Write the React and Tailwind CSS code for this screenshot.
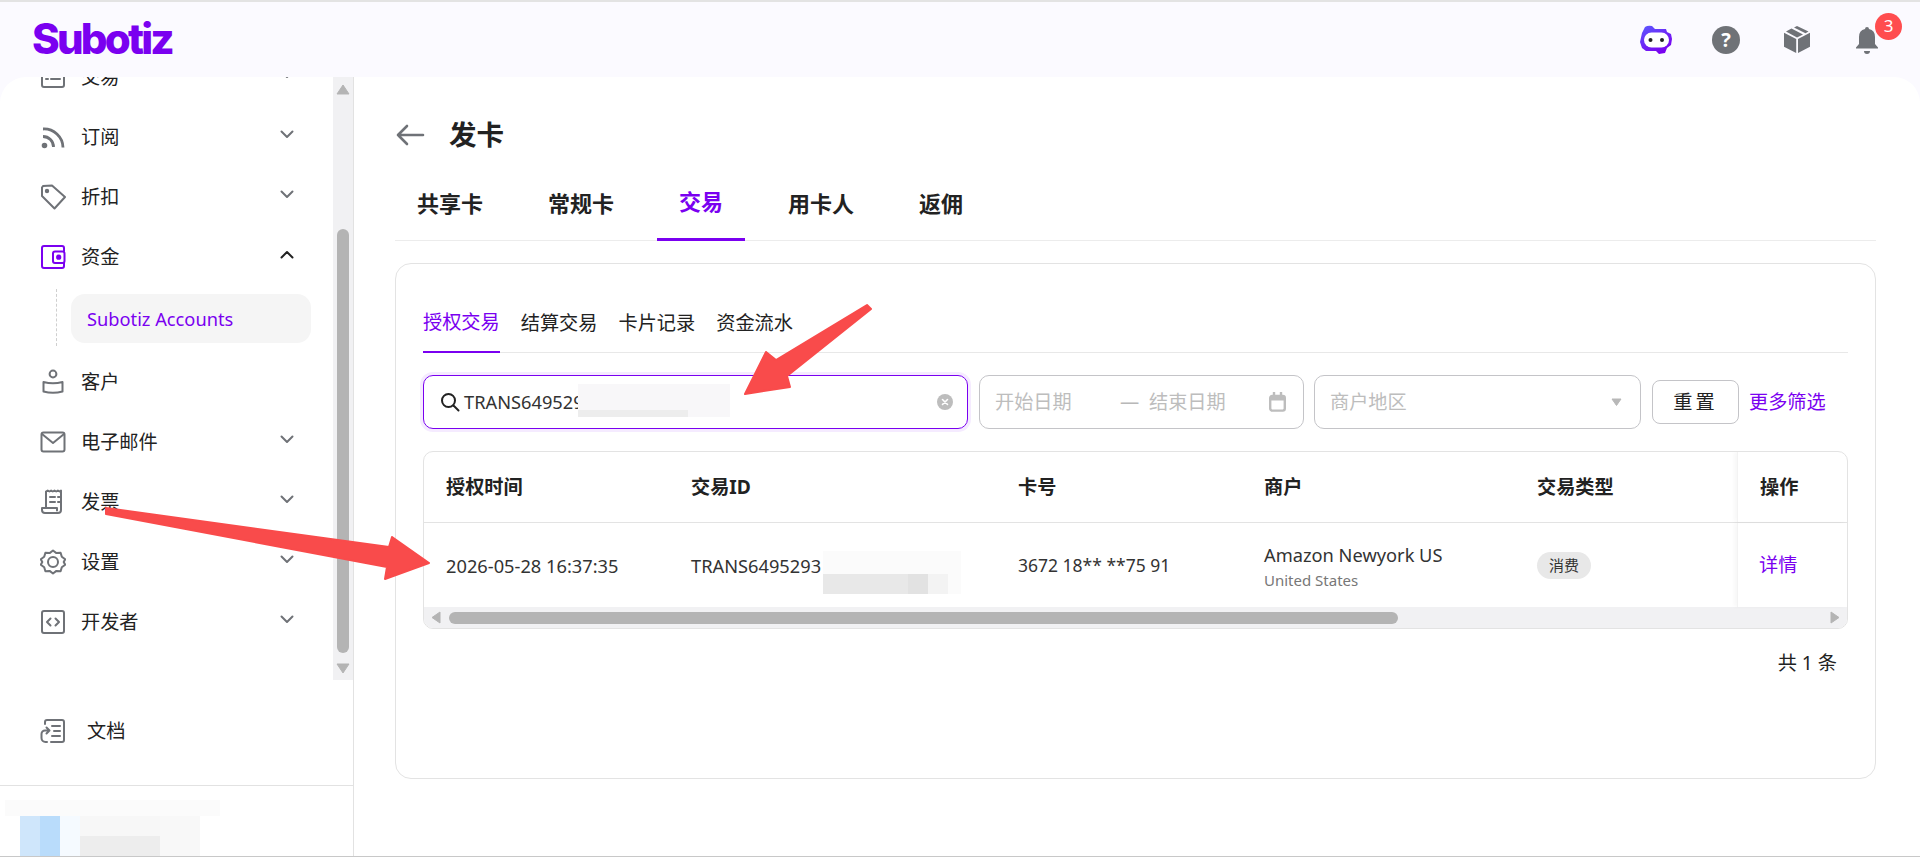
import React from 'react'

const PURPLE = '#7a00f0'

function Icon({ children, color = '#6f7277', size = 26, width = 2 }) {
  return (
    <svg width={size} height={size} viewBox="0 0 26 26" fill="none" stroke={color} strokeWidth={width} strokeLinecap="round" strokeLinejoin="round" className="shrink-0">
      {children}
    </svg>
  )
}

const icons = {
  trade: (
    <>
      <rect x="2" y="3" width="22" height="20" rx="2" />
      <path d="M6 9h2M11 9h9M6 15h2M11 15h9" />
    </>
  ),
  rss: (
    <>
      <circle cx="4.5" cy="21.5" r="1.8" fill="#6f7277" />
      <path d="M3 12.5a10.5 10.5 0 0 1 10.5 10.5M3 5a19 19 0 0 1 20 18.5" strokeWidth="2.8" strokeLinecap="butt" />
    </>
  ),
  tag: (
    <>
      <path d="M2 3.5 3 2l9-.5L25 13 14.5 24.5 2 12z" />
      <circle cx="7" cy="7" r="1.2" fill="#6f7277" />
    </>
  ),
  wallet: (
    <>
      <path d="M24 7V4a2 2 0 0 0-2-2H4a2 2 0 0 0-2 2v18a2 2 0 0 0 2 2h18a2 2 0 0 0 2-2v-3" />
      <rect x="13" y="7.5" width="11.5" height="11.5" rx="2" />
      <circle cx="18.7" cy="13.2" r="1.6" fill={PURPLE} />
    </>
  ),
  user: (
    <>
      <circle cx="13" cy="5" r="3.4" />
      <path d="M3.5 13q9.5 2.5 19 0v9.5q-9.5 2.5-19 0z" />
    </>
  ),
  mail: (
    <>
      <rect x="1.5" y="3.5" width="23" height="19" rx="2" />
      <path d="m2 5 11 9 11-9" />
    </>
  ),
  receipt: (
    <>
      <path d="M6 19V2.5l1.7-1 1.7 1 1.7-1 1.7 1 1.7-1 1.7 1 1.7-1 1.7 1 1.4-1V21a3 3 0 0 1-3 3H5a3 3 0 0 1-3-3v-2h15v2.5" />
      <path d="M10 8h5M18 8h1.5M10 13h5M18 13h1.5" />
    </>
  ),
  gear: (
    <>
      <path d="M13 1.5l3.4 2.6 4.2-.4 1.2 4 3.4 2.6-1.5 2.7 1.5 2.7-3.4 2.6-1.2 4-4.2-.4L13 24.5l-3.4-2.6-4.2.4-1.2-4L.8 15.7l1.5-2.7-1.5-2.7 3.4-2.6 1.2-4 4.2.4z" />
      <circle cx="13" cy="13" r="5" />
    </>
  ),
  code: (
    <>
      <rect x="2" y="2" width="22" height="22" rx="2" />
      <path d="M10.5 9.5 7 13l3.5 3.5M15.5 9.5 19 13l-3.5 3.5" />
    </>
  ),
  doc: (
    <>
      <path d="M5 6V4a2 2 0 0 1 2-2h15a2 2 0 0 1 2 2v18a2 2 0 0 1-2 2H11" />
      <path d="M12 8h8M14 13h6M12 18h8" />
      <path d="M9.5 12.5H5a3.5 3.5 0 0 0-3.5 3.5v4A4 4 0 0 0 5.5 24H7M6.5 9.5l3 3-3 3" />
    </>
  ),
}

function Chevron({ up = false, color = '#6f7277' }) {
  return (
    <svg width="14" height="9" viewBox="0 0 14 9" fill="none" stroke={color} strokeWidth="2" strokeLinecap="round" strokeLinejoin="round">
      <path d={up ? 'M1.5 7.5 7 2l5.5 5.5' : 'M1.5 1.5 7 7l5.5-5.5'} />
    </svg>
  )
}

function NavItem({ icon, label, chevron = true, open = false }) {
  return (
    <div className="flex h-[60px] items-center pl-[40px] pr-[39px]">
      <Icon color={open ? PURPLE : '#6f7277'}>{icons[icon]}</Icon>
      <span className="ml-[15px] flex-1 text-[19.2px] text-[#222]">{label}</span>
      {chevron && (
        <span className="mb-[6px] flex">
          <Chevron up={open} color={open ? '#222' : '#6f7277'} />
        </span>
      )}
    </div>
  )
}

function Sidebar() {
  return (
    <aside className="flex w-[354px] shrink-0 flex-col border-r border-[#e2e2e2]">
      <div className="flex h-[603px] overflow-hidden">
        <div className="min-w-0 flex-1 -mt-[30px]">
          <NavItem icon="trade" label="交易" />
          <NavItem icon="rss" label="订阅" />
          <NavItem icon="tag" label="折扣" />
          <NavItem icon="wallet" label="资金" open />
          <div className="flex h-[65px] pl-[56px] pt-[2px]">
            <div className="h-[57px] border-l border-dashed border-[#cfcfcf]" />
            <div className="ml-[14px] mt-[5px] flex h-[49px] w-[240px] items-center rounded-[14px] bg-[#f5f5f5] pl-[16px] pt-[1px] text-[18.25px] text-[#7a00f0]">
              Subotiz Accounts
            </div>
          </div>
          <NavItem icon="user" label="客户" chevron={false} />
          <NavItem icon="mail" label="电子邮件" />
          <NavItem icon="receipt" label="发票" />
          <NavItem icon="gear" label="设置" />
          <NavItem icon="code" label="开发者" />
        </div>
        <div className="flex h-full w-[20px] shrink-0 flex-col items-center bg-[#f1f1f3] pt-[7px] pb-[6px]">
          <svg width="14" height="11" viewBox="0 0 14 11"><path d="M7 1 13 10H1z" fill="#b4b4b4" stroke="#b4b4b4" strokeLinejoin="round" /></svg>
          <div className="mt-[134px] h-[425px] w-[12px] rounded-full bg-[#b4b4b4]" />
          <svg className="mt-[10px]" width="14" height="11" viewBox="0 0 14 11"><path d="M7 10 13 1H1z" fill="#b4b4b4" stroke="#b4b4b4" strokeLinejoin="round" /></svg>
        </div>
      </div>
      <div className="flex h-[105px] items-center pb-[3px] pl-[40px]">
        <Icon>{icons.doc}</Icon>
        <span className="ml-[21px] text-[19.2px] text-[#222]">文档</span>
      </div>
      <div className="flex flex-1 flex-col overflow-hidden border-t border-[#e2e2e2] pt-[14px]">
        <div className="ml-[5px] h-[20px] w-[215px] bg-[#fbfbfb]" />
        <div className="ml-[20px] flex h-[40px]">
          <div className="w-[20px] bg-[#cfe6fb]" />
          <div className="w-[20px] bg-[#b9dcfb]" />
          <div className="w-[20px] bg-[#f5faff]" />
          <div className="flex w-[80px] flex-col">
            <div className="h-[20px] bg-[#f7f7f7]" />
            <div className="h-[20px] bg-[#ededed]" />
          </div>
          <div className="w-[40px] bg-[#f8f8f8]" />
        </div>
      </div>
    </aside>
  )
}

function FilterBar() {
  return (
    <div className="mt-[22px] flex items-center">
      <div className="relative flex h-[54px] w-[545px] items-center rounded-[10px] border border-[#7a00f0] pl-[15px] pr-[14px] shadow-[0_0_0_3px_#f5ebff]">
        <svg width="22" height="22" viewBox="0 0 22 22" fill="none" stroke="#222" strokeWidth="2" strokeLinecap="round">
          <circle cx="9.5" cy="9.5" r="6.5" />
          <path d="m14.5 14.5 5 5" />
        </svg>
        <span className="ml-[3px] flex-1 text-[18.25px] text-[#333]">TRANS6495293</span>
        <svg width="16" height="16" viewBox="0 0 16 16">
          <circle cx="8" cy="8" r="8" fill="#bdbdbd" />
          <path d="m5.5 5.5 5 5m0-5-5 5" stroke="#fff" strokeWidth="1.6" strokeLinecap="round" />
        </svg>
        {/* blurred part of the id */}
        <div className="absolute left-[154px] top-[8px] flex h-[33px] w-[152px] flex-col justify-end bg-[#f8f7f9]">
          <div className="h-[7px] w-[110px] bg-[#ededed]" />
        </div>
      </div>
      <div className="ml-[11px] flex h-[54px] w-[325px] items-center rounded-[10px] border border-[#c4c4c8] pl-[15px] pr-[17px] text-[19.2px] text-[#bdbdbd]">
        <span className="w-[125px]">开始日期</span>
        <span className="w-[29px] text-[#b8b8b8]">—</span>
        <span className="flex-1">结束日期</span>
        <svg width="17" height="20" viewBox="0 0 17 20" fill="none" stroke="#bdbdbd" strokeWidth="2.4">
          <rect x="1.2" y="4" width="14.6" height="14.6" rx="2" />
          <path d="M1.5 6.5h14" strokeWidth="4" />
          <path d="M5 0v4M12 0v4" />
        </svg>
      </div>
      <div className="ml-[10px] flex h-[54px] w-[327px] items-center justify-between rounded-[10px] border border-[#c4c4c8] pl-[15px] pr-[18px] text-[19.2px] text-[#bdbdbd]">
        <span>商户地区</span>
        <svg width="11" height="8" viewBox="0 0 11 8"><path d="M5.5 7.5 1 1h9z" fill="#b8b8b8" stroke="#b8b8b8" strokeLinejoin="round" /></svg>
      </div>
      <button className="ml-[11px] h-[44px] w-[87px] rounded-[8px] border border-[#c4c4c8] text-[19.2px] tracking-[3px] text-[#222]">重置</button>
      <span className="ml-[10px] text-[19.2px] text-[#7a00f0]">更多筛选</span>
    </div>
  )
}

function TxTable() {
  const headCls = 'flex items-center pl-[22px] text-[19.2px] font-bold text-[#222]'
  const cellCls = 'flex items-center pl-[22px] pt-[1px] text-[18.25px] text-[#333]'
  return (
    <div className="mt-[22px] overflow-hidden rounded-[10px] border border-[#e3e3e3]">
      <div className="grid h-[71px] grid-cols-[245px_327px_246px_273px_222px_1fr] border-b border-[#e3e3e3]">
        <div className={headCls}>授权时间</div>
        <div className={headCls}>交易ID</div>
        <div className={headCls}>卡号</div>
        <div className={headCls}>商户</div>
        <div className={headCls}>交易类型</div>
        <div className={`${headCls} border-l border-[#f3f3f3] shadow-[-3px_0_4px_rgba(0,0,0,0.03)]`}>操作</div>
      </div>
      <div className="grid h-[84px] grid-cols-[245px_327px_246px_273px_222px_1fr]">
        <div className={cellCls}>2026-05-28 16:37:35</div>
        <div className={`${cellCls} relative`}>
          TRANS6495293
          {/* blurred part of the id */}
          <div className="absolute left-[154px] top-[28px] flex h-[43px] w-[138px] flex-col justify-end bg-[#fbfbfb]">
            <div className="flex h-[20px]">
              <div className="w-[85px] bg-[#e8e8e8]" />
              <div className="w-[20px] bg-[#e2e2e2]" />
              <div className="w-[20px] bg-[#f3f3f3]" />
            </div>
          </div>
        </div>
        <div className="flex items-center pl-[22px] pt-[1px] text-[17.5px] text-[#333]">3672 18** **75 91</div>
        <div className="flex flex-col justify-center pl-[22px] pt-[3px]">
          <span className="text-[18.25px] leading-[26px] text-[#333]">Amazon Newyork US</span>
          <span className="text-[15px] leading-[24px] text-[#777]">United States</span>
        </div>
        <div className="flex items-center pl-[22px]">
          <span className="flex h-[27px] w-[54px] items-center justify-center rounded-full bg-[#e8e8e8] text-[15px] text-[#333]">消费</span>
        </div>
        <div className="flex items-center border-l border-[#f3f3f3] pl-[21px] pt-[1px] text-[19.2px] text-[#7a00f0] shadow-[-3px_0_4px_rgba(0,0,0,0.03)]">详情</div>
      </div>
      <div className="flex h-[21px] items-center bg-[#f1f1f3] px-[7px]">
        <svg width="10" height="13" viewBox="0 0 10 13"><path d="M1 6.5 9 1v11z" fill="#b4b4b4" stroke="#b4b4b4" strokeLinejoin="round" /></svg>
        <div className="ml-[8px] h-[12px] w-[949px] rounded-full bg-[#b4b4b4]" />
        <div className="flex-1" />
        <svg width="10" height="13" viewBox="0 0 10 13"><path d="M9 6.5 1 1v11z" fill="#b4b4b4" stroke="#b4b4b4" strokeLinejoin="round" /></svg>
      </div>
    </div>
  )
}

function Main() {
  const tabs = ['共享卡', '常规卡', '交易', '用卡人', '返佣']
  const subTabs = ['授权交易', '结算交易', '卡片记录', '资金流水']
  return (
    <main className="min-w-0 flex-1 pl-[41px] pr-[44px] pt-[38px]">
      <div className="flex h-[40px] items-center">
        <svg width="30" height="24" viewBox="0 0 30 24" fill="none" stroke="#6f7277" strokeWidth="2.6" strokeLinecap="round" strokeLinejoin="round">
          <path d="M28 12H3M12 3l-9 9 9 9" />
        </svg>
        <h1 className="ml-[24px] text-[27.5px] font-bold text-[#222]">发卡</h1>
      </div>
      <div className="mt-[22px] flex h-[64px] border-b border-[#ececec]">
        {tabs.map((t) => (
          <div
            key={t}
            className={`mr-[21px] flex h-[64px] items-center px-[22px] pb-[12px] text-[22px] font-bold ${t === '交易' ? 'border-b-[3px] border-[#7a00f0] text-[#7a00f0]' : 'text-[#222]'}`}
          >
            {t}
          </div>
        ))}
      </div>
      <section className="mt-[22px] h-[516px] rounded-[16px] border border-[#e3e3e3] px-[27px] pt-[29px]">
        <div className="flex h-[60px] gap-[21px] border-b border-[#e8e8e8]">
          {subTabs.map((t, i) => (
            <div key={t} className={`flex h-[60px] items-center text-[19.2px] ${i === 0 ? 'border-b-2 border-[#7a00f0] text-[#7a00f0]' : 'text-[#222]'}`}>
              {t}
            </div>
          ))}
        </div>
        <FilterBar />
        <TxTable />
        <div className="mt-[20px] pr-[11px] text-right text-[19.2px] text-[#222]">共 1 条</div>
      </section>
    </main>
  )
}

function Header() {
  return (
    <header className="flex h-[75px] shrink-0 items-center justify-between pl-[32px] pr-[40px]">
      <span className="mb-[1px] font-['Inter',sans-serif] text-[42px] font-extrabold leading-none tracking-[-2.8px] text-[#7a00f0]">Subotiz</span>
      <div className="flex items-center">
        <svg width="34" height="30" viewBox="0 0 34 30">
          <defs>
            <linearGradient id="bot" x1="0" y1="0" x2="0.6" y2="1">
              <stop offset="0" stopColor="#5b5bff" />
              <stop offset="1" stopColor="#7a00f0" />
            </linearGradient>
          </defs>
          <path d="M3 8 6 2q3-2 7-1l3 3h11l1 3 4 2 1 5-1 6-4 3-2 5-6 1-3-3H7l-4-3-2-6z" fill="url(#bot)" />
          <rect x="5" y="7.5" width="25" height="15" rx="7.5" fill="#fff" />
          <circle cx="11.5" cy="15" r="2" fill="#222" />
          <circle cx="23" cy="15" r="2" fill="#222" />
        </svg>
        <span className="ml-[39px] flex h-[28px] w-[28px] items-center justify-center rounded-full bg-[#6f7277] text-[20px] font-bold text-white">?</span>
        <svg className="ml-[43px]" width="28" height="28" viewBox="0 0 28 28" fill="#6f7277">
          <path d="M13.2 13 1 6.8v14L13.2 27zM15 13v14l12-6.2v-14zM14 11.5 20 8.5 8.5 2.6 3 5.6zM22.5 7.2 25.5 5.6 14 0l-3 1.5z" />
        </svg>
        <span className="relative ml-[43px] flex w-[26px]">
          <svg width="26" height="30" viewBox="0 0 26 30" fill="#6f7277">
            <path d="M13 2a2 2 0 0 1 2 2 8 8 0 0 1 6 8v7l3 3.5v1H2v-1L5 19v-7a8 8 0 0 1 6-8 2 2 0 0 1 2-2zM10 26h6a3 3 0 0 1-6 0z" />
          </svg>
          <span className="absolute -right-[22px] -top-[12px] flex h-[27px] w-[27px] items-center justify-center rounded-full bg-[#ff4d4f] text-[17px] text-white">3</span>
        </span>
      </div>
    </header>
  )
}

export default function App() {
  return (
    <div className="relative flex h-[857px] w-[1920px] flex-col overflow-hidden border-t-2 border-b border-t-[#e3e3e3] border-b-[#c8c8c8] bg-[#fbfaff] font-['Noto_Sans','Noto_Sans_CJK_SC',sans-serif]">
      <Header />
      <div className="flex min-h-0 flex-1 overflow-hidden rounded-t-[26px] bg-white">
        <Sidebar />
        <Main />
      </div>
      {/* annotation arrows sit over the whole page */}
      <svg className="pointer-events-none absolute -top-[2px] left-0" width="1920" height="857" viewBox="0 0 1920 857">
        <g fill="#f94b4b" stroke="#f94b4b" strokeWidth="2" strokeLinejoin="round">
          <polygon points="867,305 871,309 787,376 790,387 745,394 766,352 776,360" />
          <polygon points="106,508 389,547 392,537 429,563 385,579 387,567 106,514" />
        </g>
      </svg>
    </div>
  )
}
